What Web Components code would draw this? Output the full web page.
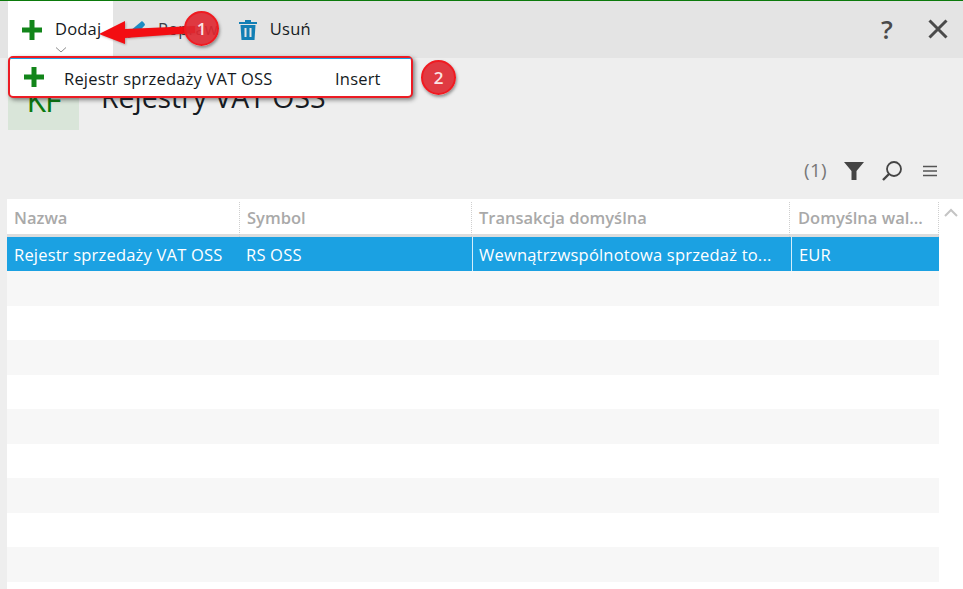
<!DOCTYPE html>
<html lang="pl"><head><meta charset="utf-8"><title>Rejestry VAT OSS</title>
<style>
html,body{margin:0;padding:0;height:589px;overflow:hidden;background:#eeeeee;font-family:"Open Sans","Noto Sans",sans-serif;color:#1a1a1a}
</style></head><body>
<app-window>
  <app-toolbar slot="toolbar">
    <tool-button slot="left" active label="Dodaj" chevron><svg width="20" height="20" viewBox="0 0 20 20"><path d="M7.500 0h5v7.500H20v5h-7.500V20h-5v-7.500H0v-5h7.500z" fill="#12851a"/></svg></tool-button>
    <tool-button slot="left" label="Popraw"><svg width="22" height="22" viewBox="0 0 22 22"><path d="M3 19l2-7L17 2c1.500 1 3 3 3 4L10 17z" fill="#1c8cc4"/></svg></tool-button>
    <tool-button slot="left" label="Usuń"><svg width="20" height="22" viewBox="0 0 20 22"><path d="M7 1h6v2h6v2H1V3h6zM2.500 6h15l-1 15h-13zM6.500 9v9h2V9zm5 0v9h2V9z" fill="#127fb5" fill-rule="evenodd"/></svg></tool-button>
  </app-toolbar>
  <page-header slot="header" mark="KF" heading="Rejestry VAT OSS"></page-header>
  <grid-tools slot="tools" count="(1)"></grid-tools>
  <data-grid slot="grid"></data-grid>
  <popup-menu slot="overlay" label="Rejestr sprzedaży VAT OSS" shortcut="Insert"></popup-menu>
  <call-out slot="overlay"></call-out>
  <num-badge slot="overlay" style="left:184px;top:11px">1</num-badge>
  <num-badge slot="overlay" style="left:421px;top:60px">2</num-badge>
</app-window>
<script>
const def=(name,html,init)=>customElements.define(name,class extends HTMLElement{
  connectedCallback(){ if(this.shadowRoot) return; const r=this.attachShadow({mode:'open'}); r.innerHTML=typeof html==='function'?html(this):html; init&&init(r,this);}
});
def('app-window',`<style>
:host{display:block;position:relative;width:963px;height:589px;overflow:hidden}
.stack{display:flex;flex-direction:column;height:100%}
</style><div class="stack"><slot name="toolbar"></slot><slot name="header"></slot><slot name="tools"></slot><slot name="grid"></slot></div><slot name="overlay"></slot>`);
def('app-toolbar',`<style>
:host{display:flex;align-items:stretch;height:57px;background:#e4e4e4;border-top:1px solid #0b7a0b;padding-left:8px;box-sizing:content-box;flex:none}
.left{display:flex}
.right{margin-left:auto;display:flex;align-items:center;gap:27px;padding:0 14px 0 0;height:56px}
svg{display:block}
</style><div class="left"><slot name="left"></slot></div>
<div class="right"><span style="font:600 26px 'Open Sans',sans-serif;color:#4a4a4a;width:24px;text-align:center;line-height:1;position:relative;left:-1px">?</span>
<svg width="22" height="22" viewBox="0 0 22 22"><path d="M2.500 2.500l17 17M19.500 2.500l-17 17" stroke="#4a4a4a" stroke-width="3"/></svg></div>`);
def('tool-button',h=>{const l=h.getAttribute('label');return `<style>
:host{display:flex;position:relative;align-items:center;gap:13px;height:57px;box-sizing:border-box;font-size:16.500px;letter-spacing:.2px;color:#151a22}
:host([active]){background:#fff;width:105px;padding:0 0 0 14px}
:host(:not([active])){padding:0 0 0 ${l==='Popraw'?'12px':'20px'};gap:${l==='Popraw'?'11px':'12px'}}
.ico{flex:none;display:flex}
.lab{position:relative;top:-1px;${l==='Popraw'?'color:#3b4048':''}}
.chev{position:absolute;left:47px;top:46px}
</style><span class="ico"><slot></slot></span><span class="lab">${l}</span>
${h.hasAttribute('chevron')?'<svg class="chev" width="12" height="6" viewBox="0 0 12 6"><path d="M1 .5l5 4.500 5-4.500" fill="none" stroke="#8a8a8a"/></svg>':''}`});
def('page-header',h=>`<style>
:host{display:flex;align-items:flex-start;gap:22px;height:72px;padding-left:8px;flex:none}
.mark{width:71px;height:72px;background:#d9e5d9;color:#0a7a0f;font-size:32px;display:flex;align-items:center;justify-content:center;padding-top:10px;box-sizing:border-box;letter-spacing:-1px}
h1{margin:0;font-size:28.400px;font-weight:400;color:#151a22;line-height:38px;margin-top:20px}
</style><div class="mark">${h.getAttribute('mark')}</div><h1>${h.getAttribute('heading')}</h1>`);
def('grid-tools',h=>`<style>
:host{display:flex;align-items:center;justify-content:flex-end;height:69px;padding:0 26px 0 0;flex:none}
.c{font-size:19px;color:#777;margin-right:16px;position:relative;top:5px;letter-spacing:.3px}
svg{display:block;position:relative}
</style><span class="c">${h.getAttribute('count')}</span>
<svg width="22" height="22" viewBox="0 0 22 22" style="margin-right:16px;top:6px"><path d="M1 2h20l-7.500 9v9h-5v-9z" fill="#444"/></svg>
<svg width="22" height="22" viewBox="0 0 22 22" style="margin-right:20px;top:6px"><circle cx="13" cy="9" r="7" fill="none" stroke="#444" stroke-width="1.800"/><path d="M8 14l-6 6" stroke="#444" stroke-width="2.400"/></svg>
<svg width="14" height="12" viewBox="0 0 14 12" style="top:6px"><path d="M0 1.500h14M0 6h14M0 10.500h14" stroke="#555" stroke-width="1.300"/></svg>`);
def('data-grid',()=>{
  const head=['Nazwa','Symbol','Transakcja domyślna','Domyślna wal...'];
  const sel=['Rejestr sprzedaży VAT OSS','RS OSS','Wewnątrzwspólnotowa sprzedaż to...','EUR'];
  let rows='';
  for(let i=0;i<9;i++) rows+=`<div class="row ${i%2==0?'alt':''}"></div>`;
  return `<style>
:host{display:flex;flex:1;padding-left:7px;min-height:0;background:#eee}
.main{width:932px;background:#fff;display:flex;flex-direction:column;overflow:hidden}
.head,.sel{display:grid;flex:none}
.head{grid-template-columns:233px 232px 318px 149px;height:35px;border-bottom:3px solid #dddddd;font-weight:600;font-size:16.500px;color:#a9a9a9}
.head div{padding:0 0 0 7px;border-right:1px dotted #cfcfcf;margin:3px 0 -3px;line-height:32px;white-space:nowrap;overflow:hidden;box-sizing:border-box}
.head div:last-child{padding-left:8px}
.sel{grid-template-columns:232px 234px 319px 147px;height:34px;background:#1ba1e2;color:#fff;font-size:16.500px;letter-spacing:.2px}
.sel div{padding-left:7px;line-height:36px;border-right:1px solid #d4eefb;white-space:nowrap;overflow:hidden;box-sizing:border-box}
.sel div:first-child{border:0}
.sel div:nth-child(3){padding-left:6px}
.sel div:last-child{border:0;padding-left:7px}
.row{height:34.500px;flex:none}.alt{background:#f7f7f7}
.side{width:24px;background:#fff;display:flex;justify-content:center;padding-top:9px;box-sizing:border-box}
svg{display:block}
</style><div class="main"><div class="head">${head.map(t=>`<div>${t}</div>`).join('')}</div>
<div class="sel">${sel.map(t=>`<div>${t}</div>`).join('')}</div>${rows}</div>
<div class="side"><svg width="14" height="9" viewBox="0 0 14 9"><path d="M1 8l6-6 6 6" fill="none" stroke="#c4c4c4" stroke-width="2"/></svg></div>`});
def('popup-menu',h=>`<style>
:host{position:absolute;left:8px;top:56px;width:405px;height:42px;box-sizing:border-box;border:2px solid #ec1c24;border-radius:5px;background:#fff;display:flex;align-items:center;box-shadow:2px 2px 4px rgba(40,40,40,.55);font-size:16.500px;letter-spacing:.2px;color:#151a22}
.blue{position:absolute;left:0;right:0;top:0;height:1px;background:#1ba1e2}
svg{display:block;margin-left:14px;flex:none}
.l{margin-left:20px;width:271px;position:relative;top:1px}.s{position:relative;top:1px}
</style><div class="blue"></div><svg width="20" height="20" viewBox="0 0 20 20"><path d="M7.500 0h5v7.500H20v5h-7.500V20h-5v-7.500H0v-5h7.500z" fill="#12851a"/></svg><span class="l">${h.getAttribute('label')}</span><span class="s">${h.getAttribute('shortcut')}</span>`);
def('call-out',`<style>:host{position:absolute;left:95px;top:18px;width:105px;height:30px}svg{display:block;filter:drop-shadow(1px 1px 1px rgba(60,0,0,.3))}</style>
<svg width="105" height="30" viewBox="0 0 105 30"><path d="M4 16L30 3V11L100 8V15L30 20V26z" fill="#f30d12"/></svg>`);
def('num-badge',`<style>:host{position:absolute;width:35px;height:35px;box-sizing:border-box;border-radius:50%;background:rgba(222,40,48,.91);border:2px solid #f01a20;color:#fbe4e4;font:600 17px/31px "Open Sans",sans-serif;text-align:center;box-shadow:1px 2px 3px rgba(60,60,60,.5)}</style><slot></slot>`);
</script></body></html>
